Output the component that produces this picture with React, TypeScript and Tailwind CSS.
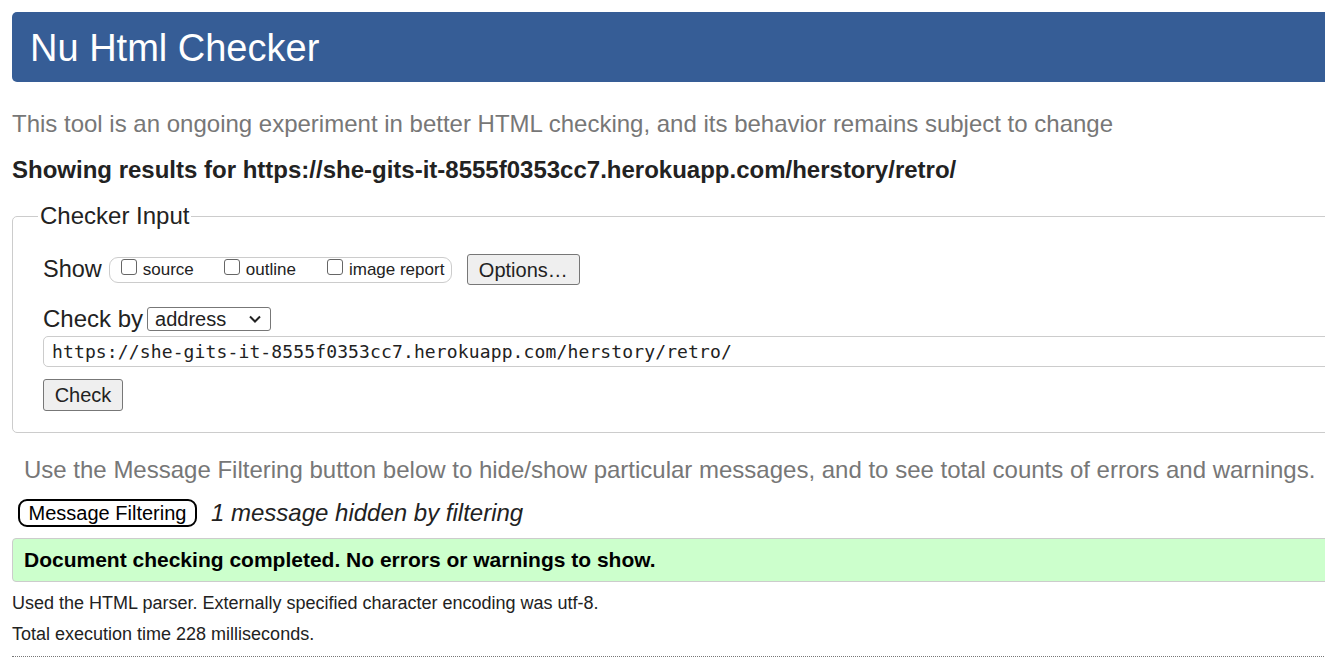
const URL = "https://she-gits-it-8555f0353cc7.herokuapp.com/herstory/retro/";

function Checkbox({ label, gap }: { label: string; gap: string }) {
  return (
    <label className={`flex items-center gap-[6px] text-[17px] text-[#222] ${gap}`}>
      <span className="mb-[5px] inline-block h-[16px] w-[16px] rounded-[3px] border border-[#666] bg-white" />
      {label}
    </label>
  );
}

export default function App() {
  return (
    <div className="h-[666px] w-full overflow-hidden bg-white font-['Liberation_Sans',Arial,sans-serif] text-[#222]">
      <div className="w-[1420px] pl-[12px] pt-[12px]">
        <h1 className="flex h-[70px] items-center rounded-l-[5px] bg-[#365d96] pl-[18px] pt-[2px] text-[38px] leading-none text-white">
          Nu Html Checker
        </h1>

        <p className="mt-[28px] text-[24px] leading-[28px] text-[#777]">
          This tool is an ongoing experiment in better HTML checking, and its behavior remains subject to change
        </p>

        <p className="mt-[18px] text-[24px] font-bold leading-[28px] text-[#222]">
          Showing results for {URL}
        </p>

        <fieldset className="mt-[18px] rounded-l-[5px] border border-[#ccc] pb-[21px] pl-[30px]">
          <legend className="ml-[-5px] px-[2px] text-[24px] leading-[28px] text-[#222]">Checker Input</legend>

          <div className="mt-[24px] flex h-[31px] items-center">
            <span className="text-[23.5px]">Show</span>
            <div className="ml-[7px] flex h-[26px] w-[343px] items-center rounded-[9px] border border-[#ccc] pl-[11px]">
              <Checkbox label="source" gap="" />
              <Checkbox label="outline" gap="ml-[30px]" />
              <Checkbox label="image report" gap="ml-[31px]" />
            </div>
            <button className="ml-[15px] h-[31px] w-[113px] rounded-[3px] border border-[#777] bg-[#efefef] text-[20px] leading-none">
              Options…
            </button>
          </div>

          <div className="mt-[22px] flex h-[24px] items-center">
            <span className="text-[24px] leading-none">Check by</span>
            <div className="ml-[4px] flex h-[24px] w-[124px] items-center justify-between rounded-[3px] border border-[#777] pl-[7px] pr-[8px] text-[20px]">
              address
              <svg width="14" height="10" viewBox="0 0 14 10" fill="none" stroke="#222" strokeWidth="2">
                <path d="M2 2.5 L7 7.5 L12 2.5" />
              </svg>
            </div>
          </div>

          <div className="mt-[5px] flex h-[31px] items-center rounded-l-[5px] border border-[#ccc] pl-[8px] font-['DejaVu_Sans_Mono',monospace] text-[18px] tracking-[0.13px]">
            {URL}
          </div>

          <button className="mt-[12px] h-[32px] w-[80px] rounded-[3px] border border-[#777] bg-[#efefef] text-[20px] leading-none">
            Check
          </button>
        </fieldset>

        <p className="mt-[23px] pl-[12px] text-[24px] leading-[28px] text-[#777]">
          Use the Message Filtering button below to hide/show particular messages, and to see total counts of errors and warnings.
        </p>

        <div className="mt-[15px] flex h-[28px] items-center pl-[6px]">
          <button className="h-[28px] w-[179px] rounded-[9px] border-2 border-black bg-white text-[20px] leading-none text-black">
            Message Filtering
          </button>
          <span className="ml-[14px] text-[24px] italic leading-[28px] text-[#222]">1 message hidden by filtering</span>
        </div>

        <div className="mt-[11px] flex h-[44px] items-center rounded-l-[4px] border border-[#ccc] bg-[#ccffcc] pl-[11px] text-[21px] font-bold text-black">
          Document checking completed. No errors or warnings to show.
        </div>

        <p className="mt-[10px] text-[18px] leading-[22px] text-[#222]">
          Used the HTML parser. Externally specified character encoding was utf-8.
        </p>
        <p className="mt-[9px] text-[18px] leading-[22px] text-[#222]">Total execution time 228 milliseconds.</p>
        <div className="mt-[11px] border-t border-dotted border-[#777]" />
      </div>
    </div>
  );
}
